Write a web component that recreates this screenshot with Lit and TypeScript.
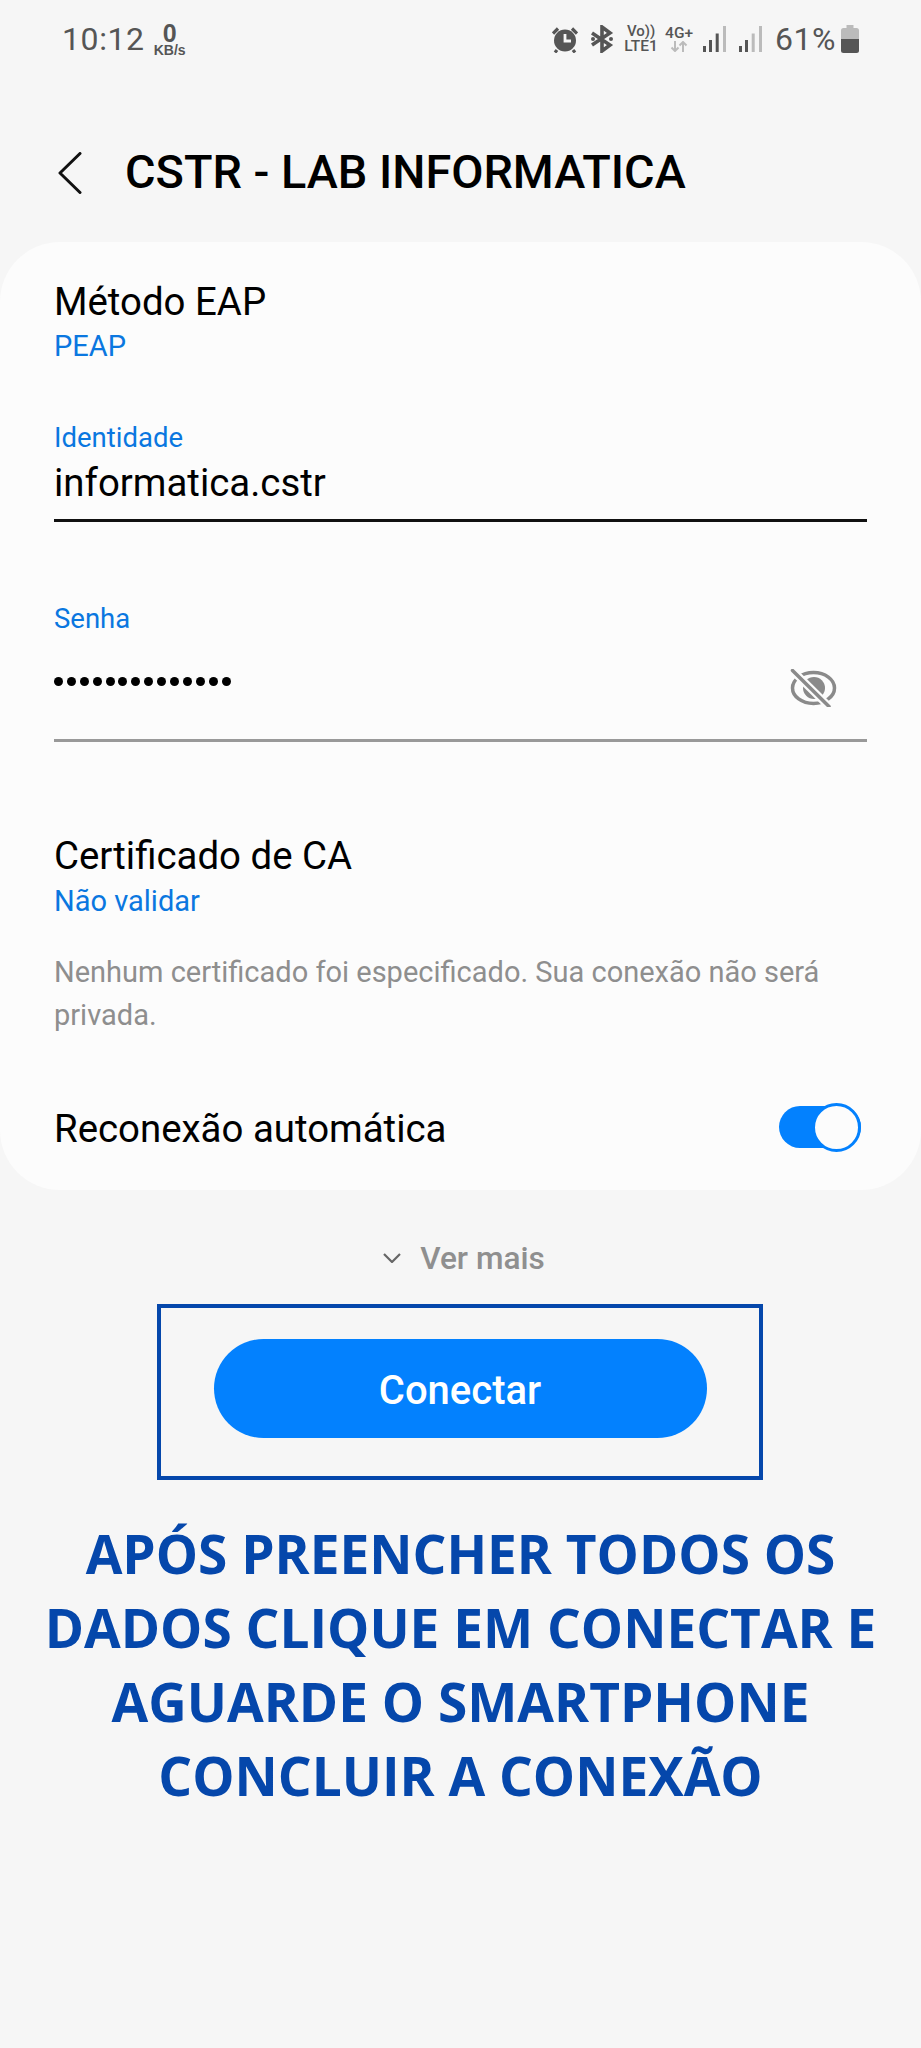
import { LitElement, html, css, svg } from 'lit';
import { customElement } from 'lit/decorators.js';

const signal = (full: number) => html`
  <svg class="signal" width="23" height="26" viewBox="0 0 23 26">
    ${[
      [0, 20, 6],
      [6, 14, 12],
      [12.7, 7.500, 18.500],
      [20, 0, 26],
    ].map(
      ([x, y, h], i) =>
        svg`<rect x=${x} y=${y} width="3" height=${h} fill=${i < full ? '#555' : '#bbb'}></rect>`,
    )}
  </svg>
`;

@customElement('app-root')
export class AppRoot extends LitElement {
  static override styles = css`
    :host {
      display: block;
      width: 921px;
      height: 2048px;
      background: #f6f6f6;
      font-family: Roboto, sans-serif;
      color: #000;
      overflow: hidden;
    }

    .status {
      display: flex;
      align-items: center;
      height: 78px;
      padding: 0 62px 0 62px;
      color: #555;
    }
    .time { font-size: 32px; letter-spacing: 0.6px; }
    .speed {
      display: flex;
      flex-direction: column;
      align-items: center;
      margin: 1px 0 0 9px;
      font-family: 'Liberation Sans', sans-serif;
      font-weight: 700;
      line-height: 1;
    }
    .speed b { font-size: 25px; height: 21px; line-height: 21px; }
    .speed span { font-size: 14px; line-height: 12px; }
    .icons { display: flex; align-items: center; margin-left: auto; }
    .alarm { margin-right: 12px; }
    .bt { margin-right: 10px; }
    .volte {
      display: flex;
      flex-direction: column;
      align-items: center;
      width: 34px;
      margin-right: 7px;
      font-size: 15px;
      font-weight: 500;
      line-height: 15px;
    }
    .volte span:last-child { font-size: 15.5px; }
    .net {
      display: flex;
      flex-direction: column;
      align-items: center;
      width: 28px;
      margin-right: 10px;
      font-size: 15.5px;
      font-weight: 500;
      line-height: 15px;
    }
    .net svg { display: block; }
    .signal { margin-right: 13px; }
    .pct { font-size: 32px; margin: 0 5px 0 0; letter-spacing: 0.5px; }

    .header {
      display: flex;
      align-items: center;
      height: 164px;
      box-sizing: border-box;
      padding: 25px 0 0 58px;
    }
    .header svg { margin-right: 43px; }
    .header h1 {
      margin: 0;
      font-size: 46.8px;
      font-weight: 500;
      line-height: 1;
    }

    .card {
      box-sizing: border-box;
      height: 948px;
      padding: 38px 54px 0;
      background: #fcfcfc;
      border-radius: 60px;
    }
    .title { font-size: 38.4px; line-height: 44px; }
    .value { font-size: 29px; line-height: 34px; color: #0a77e0; margin-top: 5px; }
    .field-label { font-size: 27.5px; line-height: 32px; color: #0a77e0; }
    .identity { margin-top: 59px; }
    .identity .input {
      font-size: 38.4px;
      line-height: 44px;
      height: 58px;
      margin-top: 7px;
      border-bottom: 3px solid #111;
    }
    .password { margin-top: 81px; }
    .password .input {
      display: flex;
      align-items: flex-start;
      justify-content: space-between;
      height: 104px;
      border-bottom: 3px solid #999;
    }
    .dots {
      display: flex;
      gap: 3.9px;
      margin-top: 42px;
    }
    .dots i {
      width: 9px;
      height: 9px;
      border-radius: 50%;
      background: #000;
    }
    .eye { margin: 34px 29px 0 0; }
    .cert { margin-top: 92px; }
    .cert .value { margin-top: 6px; }
    .note {
      margin-top: 33px;
      font-size: 29px;
      line-height: 42.5px;
      color: #8e8e8e;
    }
    .toggle-row {
      display: flex;
      align-items: flex-start;
      justify-content: space-between;
      margin-top: 71px;
      padding-right: 6px;
    }
    .switch {
      position: relative;
      width: 82px;
      height: 42px;
      margin-top: -1px;
      background: #0381fe;
      border-radius: 21px;
    }
    .switch::after {
      content: '';
      position: absolute;
      top: -3px;
      right: 0;
      width: 49px;
      height: 49px;
      box-sizing: border-box;
      background: #fcfcfc;
      border: 3px solid #0381fe;
      border-radius: 50%;
    }
    .more {
      display: flex;
      align-items: center;
      justify-content: center;
      gap: 19px;
      box-sizing: border-box;
      height: 114px;
      padding: 22px 0 0 7px;
      font-size: 31.6px;
      font-weight: 500;
      color: #8f8f8f;
    }
    .box {
      display: flex;
      align-items: flex-start;
      justify-content: center;
      box-sizing: border-box;
      width: 606px;
      height: 176px;
      margin-left: 157px;
      padding-top: 31px;
      border: 4px solid #0547ab;
    }
    .connect {
      display: flex;
      align-items: center;
      justify-content: center;
      box-sizing: border-box;
      width: 493px;
      height: 99px;
      padding-top: 3px;
      border-radius: 50px;
      background: #0381fe;
      color: #fff;
      font-size: 40px;
      font-weight: 500;
    }
    .caption {
      margin: 37px 0 0;
      text-align: center;
      font-family: 'Open Sans', sans-serif;
      font-size: 53.2px;
      font-weight: 700;
      line-height: 74px;
      color: #0547ab;
    }
  `;

  override render() {
    return html`
      <div class="status">
        <span class="time">10:12</span>
        <div class="speed"><b>0</b><span>KB/s</span></div>
        <div class="icons">
          <svg class="alarm" width="26" height="27" viewBox="0 0 26 27">
            <circle cx="13" cy="14.500" r="11" fill="#555"></circle>
            <path d="M13 8v7h6" fill="none" stroke="#f6f6f6" stroke-width="2.800"></path>
            <path d="M1 7.500 6 2.500M25 7.500 20 2.500M5 24l-2 2.500M21 24l2 2.500" stroke="#555" stroke-width="3.200"></path>
          </svg>
          <svg class="bt" width="24" height="28" viewBox="0 0 24 28">
            <path d="M2 8 20 20 12 26V2l8 6L2 20" fill="none" stroke="#555" stroke-width="3.600"></path>
            <circle cx="3" cy="14" r="2" fill="#555"></circle>
            <circle cx="21" cy="14" r="2" fill="#555"></circle>
          </svg>
          <div class="volte"><span>Vo))</span><span>LTE1</span></div>
          <div class="net">
            <span>4G+</span>
            <svg width="18" height="11" viewBox="0 0 18 11">
              <path d="M5 0v10M1.500 6.500 5 10l3.500-3.500" fill="none" stroke="#bbb" stroke-width="2"></path>
              <path d="M13 11V1M9.500 4.500 13 1l3.500 3.500" fill="none" stroke="#bbb" stroke-width="2"></path>
            </svg>
          </div>
          ${signal(3)} ${signal(2)}
          <span class="pct">61%</span>
          <svg width="18" height="28" viewBox="0 0 18 28">
            <path d="M5.500 0h7v3h3a2.500 2.500 0 0 1 2.500 2.500V14H0V5.500A2.500 2.500 0 0 1 2.500 3h3z" fill="#bbb"></path>
            <path d="M0 14h18v11.500a2.500 2.500 0 0 1-2.500 2.500h-13A2.500 2.500 0 0 1 0 25.500z" fill="#555"></path>
          </svg>
        </div>
      </div>

      <div class="header">
        <svg width="24" height="42" viewBox="0 0 24 42">
          <path d="M22 1.500 2 21l20 19.500" fill="none" stroke="#111" stroke-width="3" stroke-linecap="round" stroke-linejoin="round"></path>
        </svg>
        <h1>CSTR - LAB INFORMATICA</h1>
      </div>

      <div class="card">
        <div class="title">Método EAP</div>
        <div class="value">PEAP</div>

        <div class="identity">
          <div class="field-label">Identidade</div>
          <div class="input">informatica.cstr</div>
        </div>

        <div class="password">
          <div class="field-label">Senha</div>
          <div class="input">
            <div class="dots">${Array.from({ length: 14 }, () => html`<i></i>`)}</div>
            <svg class="eye" width="48" height="38" viewBox="0 0 48 38">
              <ellipse cx="23.500" cy="19" rx="21" ry="15.500" fill="none" stroke="#8a8a8a" stroke-width="3.500"></ellipse>
              <circle cx="24" cy="19" r="11" fill="#8a8a8a"></circle>
              <path d="M2.500 1.500 39 37.500" stroke="#fcfcfc" stroke-width="8"></path>
              <path d="M2.500 1.500 39 37.500" stroke="#8a8a8a" stroke-width="3.500" stroke-linecap="round"></path>
            </svg>
          </div>
        </div>

        <div class="cert">
          <div class="title">Certificado de CA</div>
          <div class="value">Não validar</div>
        </div>
        <div class="note">Nenhum certificado foi especificado. Sua conexão não será privada.</div>

        <div class="toggle-row">
          <span class="title">Reconexão automática</span>
          <div class="switch"></div>
        </div>
      </div>

      <div class="more">
        <svg width="18" height="10" viewBox="0 0 18 10">
          <path d="M1 1l8 8 8-8" fill="none" stroke="#666" stroke-width="2.200"></path>
        </svg>
        <span>Ver mais</span>
      </div>

      <div class="box"><div class="connect">Conectar</div></div>

      <p class="caption">
        APÓS PREENCHER TODOS OS<br />DADOS CLIQUE EM CONECTAR E<br />AGUARDE O SMARTPHONE<br />CONCLUIR A CONEXÃO
      </p>
    `;
  }
}
